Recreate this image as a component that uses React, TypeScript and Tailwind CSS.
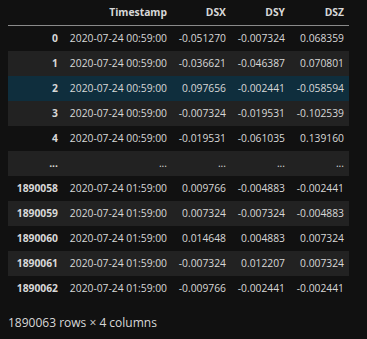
import React from "react";

const rows: { idx: string; ts: string; x: string; y: string; z: string }[] = [
  { idx: "0", ts: "2020-07-24 00:59:00", x: "-0.051270", y: "-0.007324", z: "0.068359" },
  { idx: "1", ts: "2020-07-24 00:59:00", x: "-0.036621", y: "-0.046387", z: "0.070801" },
  { idx: "2", ts: "2020-07-24 00:59:00", x: "0.097656", y: "-0.002441", z: "-0.058594" },
  { idx: "3", ts: "2020-07-24 00:59:00", x: "-0.007324", y: "-0.019531", z: "-0.102539" },
  { idx: "4", ts: "2020-07-24 00:59:00", x: "-0.019531", y: "-0.061035", z: "0.139160" },
  { idx: "...", ts: "...", x: "...", y: "...", z: "..." },
  { idx: "1890058", ts: "2020-07-24 01:59:00", x: "0.009766", y: "-0.004883", z: "-0.002441" },
  { idx: "1890059", ts: "2020-07-24 01:59:00", x: "0.007324", y: "-0.007324", z: "-0.004883" },
  { idx: "1890060", ts: "2020-07-24 01:59:00", x: "0.014648", y: "0.004883", z: "0.007324" },
  { idx: "1890061", ts: "2020-07-24 01:59:00", x: "-0.007324", y: "0.012207", z: "0.007324" },
  { idx: "1890062", ts: "2020-07-24 01:59:00", x: "-0.009766", y: "-0.002441", z: "-0.002441" },
];

export default function App() {
  return (
    <div
      className="w-[367px] h-[339px] bg-[#111111] text-[#d8d8d8] text-[10.3px] overflow-hidden"
      style={{ fontFamily: '"Open Sans", "Noto Sans", sans-serif' }}
    >
      <div className="pl-[8px] pt-0">
        <div className="w-[341px]">
          <div className="grid grid-cols-[55px_109px_59px_59px_59px] h-[26px] items-center border-b border-[#8a8a8a] font-bold">
            <div />
            <div className="text-right pr-[5px]">Timestamp</div>
            <div className="text-right pr-[5px]">DSX</div>
            <div className="text-right pr-[5px]">DSY</div>
            <div className="text-right pr-[5px]">DSZ</div>
          </div>
          {rows.map((r, i) => {
            const bg =
              i === 2 ? "bg-[#0f2e3d]" : i % 2 === 1 ? "bg-[#222222]" : "bg-transparent";
            return (
              <div
                key={i}
                className={`grid grid-cols-[55px_109px_59px_59px_59px] h-[25px] items-center ${bg}`}
              >
                <div className="text-right pr-[5px] font-bold">{r.idx}</div>
                <div className="text-right pr-[5px]">{r.ts}</div>
                <div className="text-right pr-[5px]">{r.x}</div>
                <div className="text-right pr-[5px]">{r.y}</div>
                <div className="text-right pr-[5px]">{r.z}</div>
              </div>
            );
          })}
        </div>
        <div className="mt-[13px] text-[12px]">1890063 rows × 4 columns</div>
      </div>
    </div>
  );
}
